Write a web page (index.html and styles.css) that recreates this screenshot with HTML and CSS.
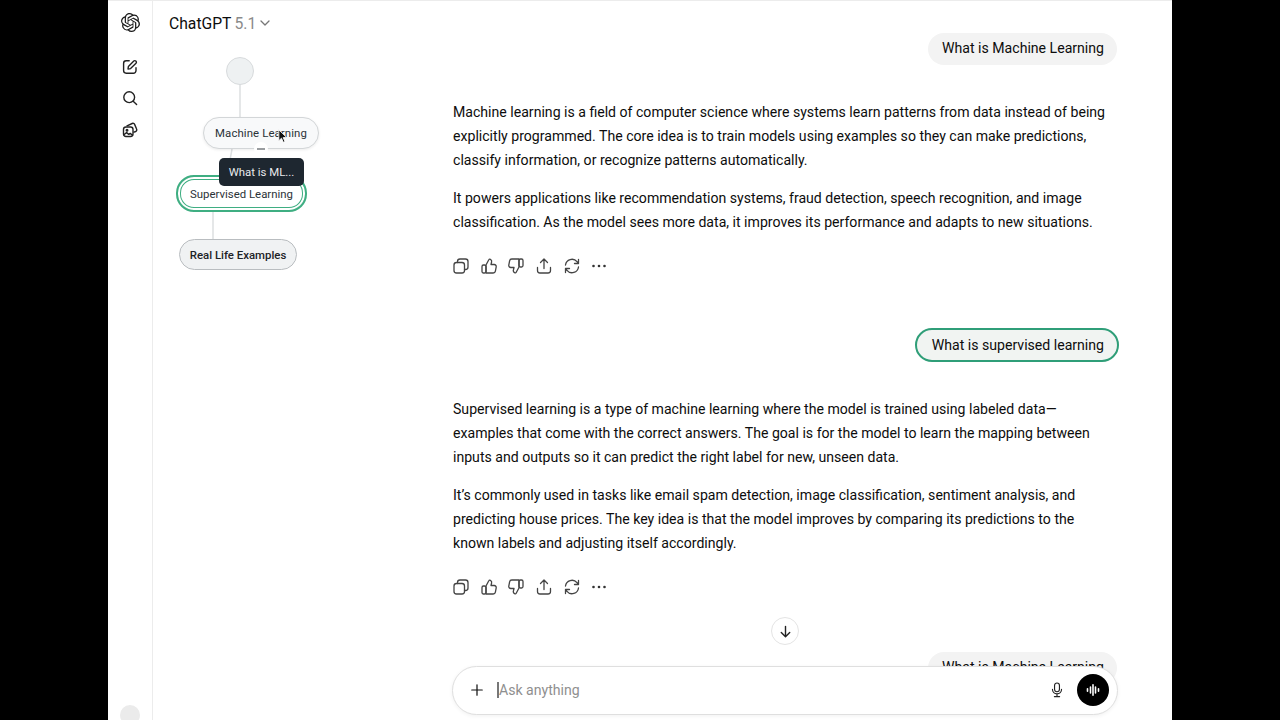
FILE: index.html
```html
<!DOCTYPE html>
<html lang="en">
<head>
    <meta charset="UTF-8">
    <meta name="viewport" content="width=device-width, initial-scale=1.0">
    <title>ChatGPT</title>
    <link rel="stylesheet" href="styles.css">
</head>
<body>

    <div class="app">
        <!-- Icon rail -->
        <aside class="rail">
            <svg class="rail-logo" viewBox="0 0 24 24" fill="#1a1a1a"><path d="M22.2819 9.8211a5.9847 5.9847 0 0 0-.5157-4.9108 6.0462 6.0462 0 0 0-6.5098-2.9A6.0651 6.0651 0 0 0 4.9807 4.1818a5.9847 5.9847 0 0 0-3.9977 2.9 6.0462 6.0462 0 0 0 .7427 7.0966 5.98 5.98 0 0 0 .511 4.9107 6.051 6.051 0 0 0 6.5146 2.9001A5.9847 5.9847 0 0 0 13.2599 24a6.0557 6.0557 0 0 0 5.7718-4.2058 5.9894 5.9894 0 0 0 3.9977-2.9001 6.0557 6.0557 0 0 0-.7475-7.0729zm-9.022 12.6081a4.4755 4.4755 0 0 1-2.8764-1.0408l.1419-.0804 4.7783-2.7582a.7948.7948 0 0 0 .3927-.6813v-6.7369l2.02 1.1686a.071.071 0 0 1 .038.052v5.5826a4.504 4.504 0 0 1-4.4945 4.4944zm-9.6607-4.1254a4.4708 4.4708 0 0 1-.5346-3.0137l.142.0852 4.783 2.7582a.7712.7712 0 0 0 .7806 0l5.8428-3.3685v2.3324a.0804.0804 0 0 1-.0332.0615L9.74 19.9502a4.4992 4.4992 0 0 1-6.1408-1.6464zM2.3408 7.8956a4.485 4.485 0 0 1 2.3655-1.9728V11.6a.7664.7664 0 0 0 .3879.6765l5.8144 3.3543-2.0201 1.1685a.0757.0757 0 0 1-.071 0l-4.8303-2.7865A4.504 4.504 0 0 1 2.3408 7.872zm16.5963 3.8558L13.1038 8.364 15.1192 7.2a.0757.0757 0 0 1 .071 0l4.8303 2.7913a4.4944 4.4944 0 0 1-.6765 8.1042v-5.6772a.79.79 0 0 0-.407-.667zm2.0107-3.0231l-.142-.0852-4.7735-2.7818a.7759.7759 0 0 0-.7854 0L9.409 9.2297V6.8974a.0662.0662 0 0 1 .0284-.0615l4.8303-2.7866a4.4992 4.4992 0 0 1 6.6802 4.66zM8.3065 12.863l-2.02-1.1638a.0804.0804 0 0 1-.038-.0567V6.0742a4.4992 4.4992 0 0 1 7.3757-3.4537l-.142.0805L8.704 5.459a.7948.7948 0 0 0-.3927.6813zm1.0976-2.3654l2.602-1.4998 2.6069 1.4998v2.9994l-2.5974 1.4997-2.6067-1.4997Z"/></svg>
            <div class="rail-icons">
                <svg viewBox="0 0 16 16" class="rail-icon"><path d="M7.200 1.800H4.200a2.600 2.600 0 0 0-2.600 2.600v7.200a2.600 2.600 0 0 0 2.600 2.600h7.200a2.600 2.600 0 0 0 2.600-2.600V8.800"/><path d="M6 10l.4-2.600 5.400-5.400a1.400 1.400 0 0 1 2 0l.2.200a1.400 1.400 0 0 1 0 2l-5.400 5.400z"/></svg>
                <svg viewBox="0 0 16 16" class="rail-icon"><circle cx="7.200" cy="7.200" r="5.400"/><path d="M11.200 11.200l3.400 3.400"/></svg>
                <svg viewBox="0 0 16 16" class="rail-icon"><path d="M5 3.800l5.200-2.300a1.800 1.800 0 0 1 2.400.9l2 4.700a1.800 1.800 0 0 1-.9 2.400l-1.700.7"/><rect x="1.500" y="5" width="9.500" height="9.500" rx="2.400"/><circle cx="5" cy="8.200" r=".8"/><path d="M1.800 12.800l2.800-2.200 2.200 1.800 1.400-1 2.400 1.800"/></svg>
            </div>
            <div class="avatar"></div>
        </aside>

        <!-- Header and conversation tree -->
        <section class="tree-panel">
            <div class="model-name">
                ChatGPT <span class="model-version">5.1</span>
                <svg viewBox="0 0 12 12" class="chevron"><path d="M2 4l4 4 4-4"/></svg>
            </div>
            <div class="tree">
                <svg class="tree-lines" width="300" height="300">
                    <path d="M87 30V80"/>
                    <path d="M79 104L74 131"/>
                    <path d="M60 165V200"/>
                </svg>
                <div class="tree-root"></div>
                <div class="tree-node node-ml">Machine Learning</div>
                <div class="node-collapse"></div>
                <div class="tree-node node-supervised">Supervised Learning</div>
                <div class="tree-node node-examples">Real Life Examples</div>
                <div class="tree-tip">What is ML...</div>
                <svg class="cursor" viewBox="0 0 12 18" width="10" height="15"><path d="M1 1v13l3.200-3 2.200 5 2-.9-2.200-4.800H10.500z" fill="#111" stroke="#fff" stroke-width="1"/></svg>
            </div>
        </section>

        <!-- Conversation -->
        <main class="chat">
            <div class="user-row first"><div class="bubble">What is Machine Learning</div></div>
            <div class="answer">
                <p>Machine learning is a field of computer science where systems learn patterns from data instead of being explicitly programmed. The core idea is to train models using examples so they can make predictions, classify information, or recognize patterns automatically.</p>
                <p>It powers applications like recommendation systems, fraud detection, speech recognition, and image classification. As the model sees more data, it improves its performance and adapts to new situations.</p>
            </div>
            <div class="actions">
                <svg viewBox="0 0 20 20"><rect x="3" y="6.500" width="10.500" height="10.500" rx="2.500"/><path d="M6.500 6.500V5.500A2.500 2.500 0 0 1 9 3h5.500A2.500 2.500 0 0 1 17 5.500V11a2.500 2.500 0 0 1-2.500 2.500h-1"/></svg>
                <svg viewBox="0 0 20 20"><path d="M7 9l2.800-5.200c.3-.6 1-.8 1.600-.5 1 .5 1.500 1.600 1.200 2.700L12 8.500h3.200a2 2 0 0 1 2 2.400l-.8 4.200a2.300 2.300 0 0 1-2.300 1.900H7z"/><rect x="3" y="9" width="4" height="8" rx="1.500"/></svg>
                <svg viewBox="0 0 20 20"><path d="M13 11l-2.800 5.200c-.3.600-1 .8-1.600.5-1-.5-1.500-1.600-1.200-2.700L8 11.500H4.800a2 2 0 0 1-2-2.400l.8-4.200A2.300 2.300 0 0 1 5.900 3H13z"/><rect x="13" y="3" width="4" height="8" rx="1.500"/></svg>
                <svg viewBox="0 0 20 20"><path d="M10 12.500V3.200M6.500 6.500L10 3l3.500 3.500"/><path d="M3.500 11.500v3a2.500 2.500 0 0 0 2.500 2.500h8a2.500 2.500 0 0 0 2.500-2.500v-3"/></svg>
                <svg viewBox="0 0 20 20"><path d="M3.500 9a6.500 6.500 0 0 1 11.500-3.300L16.500 7.500M16.500 3.500v4h-4"/><path d="M16.500 11A6.500 6.500 0 0 1 5 14.300L3.500 12.500M3.500 16.500v-4h4"/></svg>
                <svg viewBox="0 0 20 20" class="dots"><circle cx="4.500" cy="10" r="1.300"/><circle cx="10" cy="10" r="1.300"/><circle cx="15.500" cy="10" r="1.300"/></svg>
            </div>

            <div class="user-row"><div class="bubble selected">What is supervised learning</div></div>
            <div class="answer">
                <p>Supervised learning is a type of machine learning where the model is trained using labeled data—examples that come with the correct answers. The goal is for the model to learn the mapping between inputs and outputs so it can predict the right label for new, unseen data.</p>
                <p>It’s commonly used in tasks like email spam detection, image classification, sentiment analysis, and predicting house prices. The key idea is that the model improves by comparing its predictions to the known labels and adjusting itself accordingly.</p>
            </div>
            <div class="actions">
                <svg viewBox="0 0 20 20"><rect x="3" y="6.500" width="10.500" height="10.500" rx="2.500"/><path d="M6.500 6.500V5.500A2.500 2.500 0 0 1 9 3h5.500A2.500 2.500 0 0 1 17 5.500V11a2.500 2.500 0 0 1-2.500 2.500h-1"/></svg>
                <svg viewBox="0 0 20 20"><path d="M7 9l2.800-5.200c.3-.6 1-.8 1.600-.5 1 .5 1.500 1.600 1.200 2.700L12 8.500h3.200a2 2 0 0 1 2 2.400l-.8 4.200a2.300 2.300 0 0 1-2.300 1.900H7z"/><rect x="3" y="9" width="4" height="8" rx="1.500"/></svg>
                <svg viewBox="0 0 20 20"><path d="M13 11l-2.800 5.200c-.3.600-1 .8-1.600.5-1-.5-1.500-1.600-1.200-2.700L8 11.500H4.800a2 2 0 0 1-2-2.400l.8-4.200A2.300 2.300 0 0 1 5.900 3H13z"/><rect x="13" y="3" width="4" height="8" rx="1.500"/></svg>
                <svg viewBox="0 0 20 20"><path d="M10 12.500V3.200M6.500 6.500L10 3l3.500 3.500"/><path d="M3.500 11.500v3a2.500 2.500 0 0 0 2.500 2.500h8a2.500 2.500 0 0 0 2.500-2.500v-3"/></svg>
                <svg viewBox="0 0 20 20"><path d="M3.500 9a6.500 6.500 0 0 1 11.500-3.300L16.500 7.500M16.500 3.500v4h-4"/><path d="M16.500 11A6.500 6.500 0 0 1 5 14.300L3.500 12.500M3.500 16.500v-4h4"/></svg>
                <svg viewBox="0 0 20 20" class="dots"><circle cx="4.500" cy="10" r="1.300"/><circle cx="10" cy="10" r="1.300"/><circle cx="15.500" cy="10" r="1.300"/></svg>
            </div>

            <div class="user-row last"><div class="bubble">What is Machine Learning</div></div>

            <div class="scroll-down">
                <svg viewBox="0 0 16 16"><path d="M8 2.500v11M3.500 9L8 13.500 12.500 9"/></svg>
            </div>

            <div class="composer">
                <svg class="composer-plus" viewBox="0 0 16 16"><path d="M8 2v12M2 8h12"/></svg>
                <div class="composer-input"><span class="caret"></span>Ask anything</div>
                <svg class="composer-mic" viewBox="0 0 16 18"><rect x="5.200" y="1" width="5.600" height="10" rx="2.800"/><path d="M2.800 8.200a5.200 5.200 0 0 0 10.400 0M8 13.400V16M5 16.500h6"/></svg>
                <div class="voice-btn">
                    <svg viewBox="0 0 16 16"><path d="M2.500 6.800v2.400M5.500 5v6M8 2.800v10.400M10.500 5v6M13.500 6.800v2.400"/></svg>
                </div>
            </div>
        </main>
    </div>

</body>
</html>
```

FILE: styles.css
```css
html, body {
    margin: 0;
    padding: 0;
    height: 720px;
    overflow: hidden;
    background-color: #000;
    font-family: Roboto, "Liberation Sans", sans-serif;
    color: #0d0d0d;
}
.app {
    width: 1064px;
    height: 720px;
    margin: 0 auto;
    background-color: #fff;
    border-top: 1px solid #ececec;
    box-sizing: border-box;
    display: flex;
    overflow: hidden;
}

/* icon rail */
.rail {
    width: 45px;
    box-sizing: border-box;
    flex-shrink: 0;
    border-right: 1px solid #ececec;
    display: flex;
    flex-direction: column;
    align-items: center;
    position: relative;
}
.rail-logo {
    width: 19px;
    height: 19px;
    margin-top: 12px;
}
.rail-icons {
    display: flex;
    flex-direction: column;
    gap: 15.5px;
    margin-top: 26.5px;
}
.rail-icon {
    width: 16px;
    height: 16px;
    display: block;
    fill: none;
    stroke: #222;
    stroke-width: 1.4;
    stroke-linecap: round;
    stroke-linejoin: round;
}
.avatar {
    position: absolute;
    left: 12px;
    top: 704px;
    width: 20px;
    height: 20px;
    border-radius: 50%;
    background-color: #ebebeb;
}

/* header + tree */
.tree-panel {
    width: 300px;
    flex-shrink: 0;
}
.model-name {
    height: 44px;
    padding-left: 16px;
    display: flex;
    align-items: center;
    gap: 3px;
    font-size: 15.7px;
    box-sizing: border-box;
}
.model-version {
    color: #8a8a8a;
}
.chevron {
    width: 12px;
    height: 12px;
    fill: none;
    stroke: #777;
    stroke-width: 1.3;
    stroke-linecap: round;
    stroke-linejoin: round;
}
.tree {
    position: relative;
    height: 300px;
}
.tree-lines {
    position: absolute;
    left: 0;
    top: 0;
    fill: none;
    stroke: #dcdfe1;
    stroke-width: 1.5;
}
.tree-root {
    position: absolute;
    left: 73px;
    top: 12px;
    width: 26px;
    height: 26px;
    border: 1px solid #d8dbdd;
    border-radius: 50%;
    background-color: #eef1f2;
}
.tree-node {
    position: absolute;
    box-sizing: border-box;
    display: flex;
    align-items: center;
    justify-content: center;
    border-radius: 18px;
    font-size: 11.4px;
    color: #2b3338;
    background-color: #f8f9fa;
    border: 1px solid #d3d6d8;
    white-space: nowrap;
}
.node-ml {
    left: 50px;
    top: 72px;
    width: 116px;
    height: 32px;
    letter-spacing: 0.1px;
    box-shadow: 0 1px 3px rgba(0, 0, 0, 0.08);
}
.node-collapse {
    position: absolute;
    left: 101px;
    top: 97px;
    width: 14px;
    height: 14px;
    border-radius: 50%;
    background-color: #fff;
}
.node-collapse::after {
    content: "";
    position: absolute;
    left: 3px;
    top: 6px;
    width: 8px;
    height: 2px;
    background-color: #9a9da0;
}
.node-supervised {
    left: 23px;
    top: 130px;
    width: 131px;
    height: 37px;
    background-color: #fff;
    border: 2px solid #3fae82;
    box-shadow: inset 0 0 0 2px #fff, inset 0 0 0 3px #3fae82;
}
.node-examples {
    left: 26px;
    top: 194px;
    width: 118px;
    height: 31px;
    background-color: #f0f2f3;
    border-color: #b9bdc0;
    font-weight: 500;
    color: #1d2327;
}
.tree-tip {
    position: absolute;
    left: 66px;
    top: 113px;
    width: 85px;
    height: 28px;
    border-radius: 5px;
    background-color: #1e2730;
    color: #e8eaec;
    font-size: 11.4px;
    display: flex;
    align-items: center;
    justify-content: center;
}
.cursor {
    position: absolute;
    left: 125px;
    top: 84px;
}

/* conversation */
.chat {
    width: 664px;
    flex-shrink: 0;
    position: relative;
    font-size: 14.1px;
    line-height: 24px;
}
.user-row {
    display: flex;
    justify-content: flex-end;
    margin-top: 52px;
}
.user-row.first {
    margin-top: 32px;
}
.user-row.last {
    margin-top: 55px;
}
.bubble {
    height: 32px;
    padding: 0 13px 2px 14px;
    box-sizing: border-box;
    border-radius: 16px;
    background-color: #f3f3f3;
    display: flex;
    align-items: center;
    white-space: nowrap;
}
.bubble.selected {
    height: 34px;
    padding: 0 13px 0 15px;
    margin-right: -2px;
    border: 2px solid #2f9e78;
    border-radius: 18px;
    background-color: #f1f4f2;
}
.answer {
    margin-top: 35px;
}
.answer p {
    margin: 0 0 14px 0;
}
.actions {
    display: flex;
    gap: 7.7px;
    margin: 22px 0 0 -2px;
    height: 20px;
}
.actions svg {
    width: 20px;
    height: 20px;
    fill: none;
    stroke: #444;
    stroke-width: 1.3;
    stroke-linecap: round;
    stroke-linejoin: round;
}
.actions svg.dots {
    fill: #333;
    stroke: none;
}
.scroll-down {
    position: absolute;
    left: 318px;
    top: 616px;
    width: 26px;
    height: 26px;
    border: 1px solid #e4e4e4;
    border-radius: 50%;
    background-color: #fff;
    display: flex;
    align-items: center;
    justify-content: center;
}
.scroll-down svg {
    width: 15px;
    height: 15px;
    fill: none;
    stroke: #222;
    stroke-width: 1.5;
    stroke-linecap: round;
    stroke-linejoin: round;
}
.composer {
    position: absolute;
    left: -1px;
    top: 665px;
    width: 666px;
    height: 49px;
    box-sizing: border-box;
    border: 1px solid #dfdfdf;
    border-radius: 25px;
    background-color: #fff;
    box-shadow: 0 1px 4px rgba(0, 0, 0, 0.06);
    display: flex;
    align-items: center;
    padding: 0 8px 2px 17px;
}
.composer-plus {
    width: 14px;
    height: 14px;
    fill: none;
    stroke: #111;
    stroke-width: 1.4;
    stroke-linecap: round;
}
.composer-input {
    flex-grow: 1;
    margin-left: 13px;
    color: #8f8f8f;
    display: flex;
    align-items: center;
}
.caret {
    width: 2px;
    height: 16px;
    background-color: #777;
}
.composer-mic {
    width: 14px;
    height: 16px;
    margin-right: 13px;
    fill: none;
    stroke: #222;
    stroke-width: 1.3;
    stroke-linecap: round;
}
.voice-btn {
    width: 32px;
    height: 32px;
    border-radius: 50%;
    background-color: #000;
    display: flex;
    align-items: center;
    justify-content: center;
}
.voice-btn svg {
    width: 16px;
    height: 16px;
    fill: none;
    stroke: #fff;
    stroke-width: 1.6;
    stroke-linecap: round;
}
```
